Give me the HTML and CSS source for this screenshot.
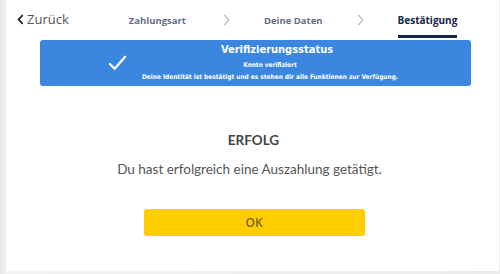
FILE: index.html
```html
<!DOCTYPE html>
<html lang="de">
<head>
<meta charset="utf-8">
<link rel="stylesheet" href="styles.css">
</head>
<body>
<div class="card">
  <header class="top">
    <a class="back"><svg class="back-ico" viewBox="0 0 8 12" width="7" height="11"><path d="M6.5 1 L1.8 6 L6.5 11" fill="none" stroke="#222" stroke-width="2"/></svg>Zurück</a>
    <nav class="steps">
      <span class="step">Zahlungsart</span>
      <svg class="sep sep-first" viewBox="0 0 8 14" width="7" height="12"><path d="M1.5 1 L6.5 7 L1.5 13" fill="none" stroke="#aab0b8" stroke-width="1.3"/></svg>
      <span class="step">Deine Daten</span>
      <svg class="sep" viewBox="0 0 8 14" width="7" height="12"><path d="M1.5 1 L6.5 7 L1.5 13" fill="none" stroke="#aab0b8" stroke-width="1.3"/></svg>
      <span class="step active">Bestätigung</span>
    </nav>
  </header>
  <div class="status">
    <svg class="check" viewBox="0 0 20 16" width="19" height="16"><path d="M2 9 L7 14 L18 1.5" fill="none" stroke="#fff" stroke-width="2.4" stroke-linecap="round" stroke-linejoin="round"/></svg>
    <div class="status-text">
      <div class="status-title">Verifizierungsstatus</div>
      <div class="status-sub">Konto verifiziert</div>
      <div class="status-sub">Deine Identität ist bestätigt und es stehen dir alle Funktionen zur Verfügung.</div>
    </div>
  </div>
  <main class="result">
    <h2 class="result-title">ERFOLG</h2>
    <p class="result-msg">Du hast erfolgreich eine Auszahlung getätigt.</p>
    <button class="ok">OK</button>
  </main>
</div>
</body>
</html>
```
FILE: styles.css
```css
html, body { margin: 0; padding: 0; }
body {
  width: 500px;
  height: 274px;
  background: linear-gradient(to right, #e6e6e6 0, #f2f2f2 6px, #ececec 100%);
  overflow: hidden;
  font-family: "Open Sans", "DejaVu Sans", sans-serif;
}
.card {
  margin-left: 6px;
  width: 493px;
  height: 271px;
  background: #fff;
  display: flex;
  flex-direction: column;
}
.top {
  display: flex;
  align-items: flex-start;
  height: 40px;
}
.back {
  display: flex;
  align-items: center;
  margin: 10px 0 0 11px;
  font-size: 13px;
  color: #555;
  gap: 3px;
}
.steps {
  display: flex;
  align-items: center;
  margin: 13px 0 0 60px;
  font-size: 9.5px;
  font-weight: 700;
}
.step {
  color: #5f6e86;
  padding-bottom: 8px;
  border-bottom: 3px solid transparent;
}
.step.active { color: #13254a; border-bottom-color: #13254a; font-size: 10px; }
.sep { margin: -11px 34px 0 34px; }
.sep-first { margin-left: 37px; margin-right: 34px; }
.status {
  margin: 0 28px 0 34px;
  height: 46px;
  background: #3b87e0;
  border-radius: 3px;
  display: flex;
  align-items: flex-start;
  color: #fff;
}
.check { margin: 15px 0 0 68px; }
.status-text {
  flex: 1;
  padding: 2px 58px 0 0;
  text-align: center;
  font-family: "DejaVu Sans", sans-serif;
  font-stretch: condensed;
  font-weight: 700;
}
.status-title { font-size: 11px; line-height: 16px; padding-left: 14px; margin-bottom: 1px; }
.status-sub { font-size: 6.5px; line-height: 12px; }
.result {
  display: flex;
  flex-direction: column;
  align-items: center;
  padding-right: 6px;
  font-family: "Lato", "Open Sans", sans-serif;
}
.result-title {
  margin: 45px 0 0 8px;
  font-size: 13.5px;
  font-weight: 700;
  color: #444;
  line-height: 18px;
}
.result-msg {
  margin: 11px 0 0;
  font-size: 13.5px;
  color: #555;
  line-height: 18px;
}
.ok {
  margin-top: 31px;
  margin-left: 9px;
  width: 221px;
  height: 27px;
  border: 0;
  border-radius: 3px;
  background: #ffcd00;
  color: #7a6520;
  font-family: "Open Sans", sans-serif;
  font-size: 12px;
  font-weight: 600;
}
```
